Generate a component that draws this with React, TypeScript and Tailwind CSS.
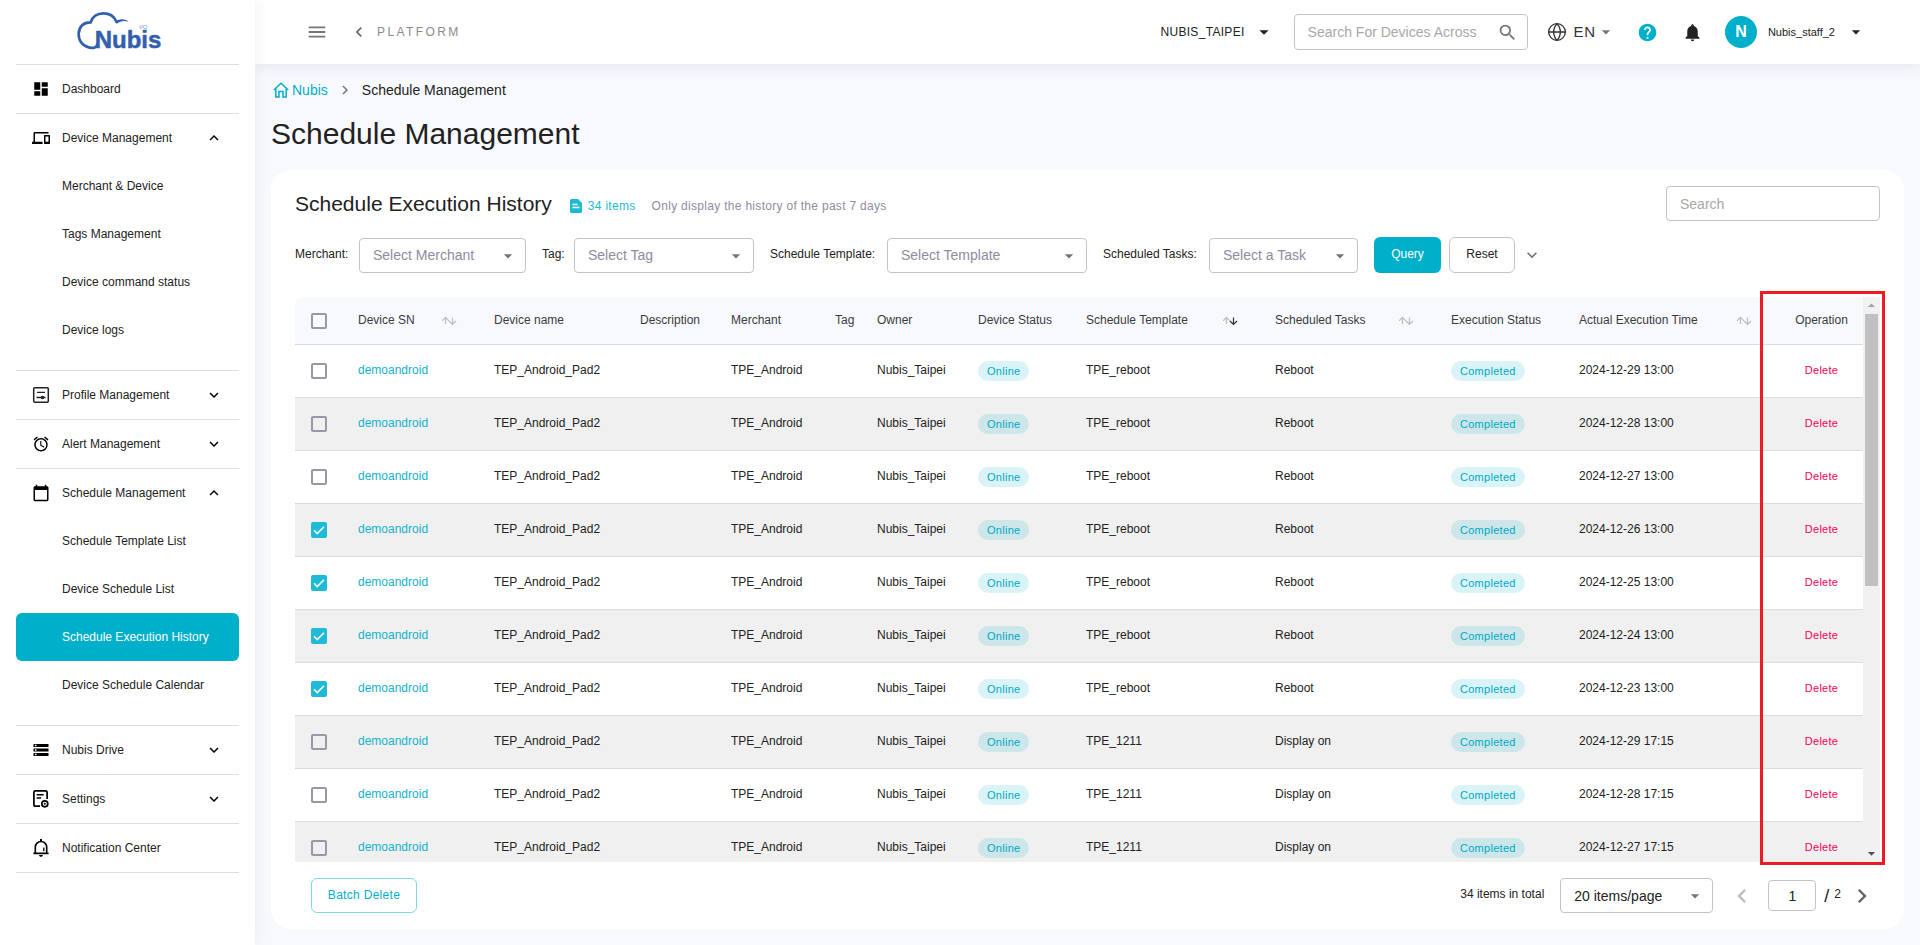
import { useState } from "react";
import type { ReactNode } from "react";
import { Globe } from "lucide-react";
import {
  MdAlarm,
  MdArrowDropDown,
  MdArrowDropUp,
  MdCalendarToday,
  MdChevronLeft,
  MdChevronRight,
  MdDashboard,
  MdDevices,
  MdHelp,
  MdKeyboardArrowDown,
  MdKeyboardArrowUp,
  MdMenu,
  MdNotifications,
  MdSearch,
  MdStorage,
} from "react-icons/md";

type Row = { template: string; task: string; time: string; checked?: boolean };

const ROWS: Row[] = [
  { template: "TPE_reboot", task: "Reboot", time: "2024-12-29 13:00" },
  { template: "TPE_reboot", task: "Reboot", time: "2024-12-28 13:00" },
  { template: "TPE_reboot", task: "Reboot", time: "2024-12-27 13:00" },
  { template: "TPE_reboot", task: "Reboot", time: "2024-12-26 13:00", checked: true },
  { template: "TPE_reboot", task: "Reboot", time: "2024-12-25 13:00", checked: true },
  { template: "TPE_reboot", task: "Reboot", time: "2024-12-24 13:00", checked: true },
  { template: "TPE_reboot", task: "Reboot", time: "2024-12-23 13:00", checked: true },
  { template: "TPE_1211", task: "Display on", time: "2024-12-29 17:15" },
  { template: "TPE_1211", task: "Display on", time: "2024-12-28 17:15" },
  { template: "TPE_1211", task: "Display on", time: "2024-12-27 17:15" },
];

const COLUMNS: { label: string; width: string; sort?: "none" | "desc"; last?: boolean }[] = [
  { label: "Device SN", width: "w-[136px]", sort: "none" },
  { label: "Device name", width: "w-[146px]" },
  { label: "Description", width: "w-[91px]" },
  { label: "Merchant", width: "w-[104px]" },
  { label: "Tag", width: "w-[42px]" },
  { label: "Owner", width: "w-[101px]" },
  { label: "Device Status", width: "w-[108px]" },
  { label: "Schedule Template", width: "w-[189px]", sort: "desc" },
  { label: "Scheduled Tasks", width: "w-[176px]", sort: "none" },
  { label: "Execution Status", width: "w-[128px]" },
  { label: "Actual Execution Time", width: "w-[183px]", sort: "none", last: true },
];

function Logo() {
  return (
    <svg viewBox="0 0 321 150" className="h-[50px] w-[107px]" aria-label="Nubis">
      <path
        d="M94 112C92 124 80 124 68 121C48 116 37 99 38 79C39 59 53 45 74 46C79 29 94 19 112 19C130 19 144 28 150 42"
        fill="none"
        stroke="#335fae"
        strokeWidth="8"
        strokeLinecap="round"
      />
      <path d="M146 45C158 35 175 34 188 44C174 40 163 42 153 50Z" fill="#335fae" />
      <text
        x="86"
        y="124"
        fontSize="72"
        fontWeight="700"
        fill="#335fae"
        stroke="#335fae"
        strokeWidth="1.5"
        strokeLinejoin="round"
        fontFamily="Liberation Sans, Arial, sans-serif"
      >
        Nubis
      </text>
      <text x="220" y="66" fontSize="18" fill="#6f8fc9" fontFamily="Liberation Sans, Arial, sans-serif">
        I/O
      </text>
    </svg>
  );
}

function ProfileIcon() {
  return (
    <svg viewBox="0 0 18 18" className="size-[18px]" fill="none" stroke="#222" strokeWidth="1.5">
      <rect x="1.7" y="1.7" width="14.6" height="14.6" rx="1" />
      <path d="M5 6.300h8M4.500 11.500h9" strokeWidth="1.300" />
      <circle cx="10.500" cy="11.500" r="1.800" fill="#222" stroke="none" />
    </svg>
  );
}

function SettingsIcon() {
  return (
    <svg viewBox="0 0 18 18" className="size-[18px]" fill="none" stroke="#000" strokeWidth="1.7">
      <path d="M8 16.2H3.2a1.3 1.3 0 0 1-1.3-1.3V2.1A1.3 1.3 0 0 1 3.2.9h10.6a1.3 1.3 0 0 1 1.3 1.3V9" />
      <path d="M4.6 4.8h7M4.6 8h4.5" strokeWidth="1.5" />
      <circle cx="12.8" cy="13.8" r="3" />
      <circle cx="12.8" cy="13.8" r="1" fill="#000" stroke="none" />
    </svg>
  );
}

function BellIcon() {
  return (
    <svg viewBox="0 0 18 18" className="size-[18px]" fill="none" stroke="#000" strokeWidth="1.6">
      <path d="M1.4 14.4h15.2M3.3 14.4V8.2a5.7 5.7 0 0 1 11.4 0v6.2" />
      <path d="M11.8 8.4v3.8" strokeWidth="1.3" />
      <path d="M9 0v2.4" strokeWidth="2" />
      <path d="M6.9 16h4.2L10 17.8H8z" fill="#000" stroke="none" />
    </svg>
  );
}

function HomeIcon() {
  return (
    <svg viewBox="0 0 16 16" className="size-4" fill="none" stroke="#00afc9" strokeWidth="1.5">
      <path d="M.8 8 8 1.200 15.200 8" />
      <path d="M2.800 6.500v8.500h3.200V9.500h4V15h3.200V6.500" />
    </svg>
  );
}

function DocIcon() {
  return (
    <svg viewBox="0 0 12 14" className="h-[14px] w-3">
      <path d="M1.5 0H8l4 4v8.5a1.5 1.5 0 0 1-1.5 1.5h-9A1.5 1.5 0 0 1 0 12.5v-11A1.5 1.5 0 0 1 1.5 0Z" fill="#1fbbd3" />
      <path d="M2.5 5.500h5M2.500 8.500h7" stroke="#fff" strokeWidth="1.3" />
    </svg>
  );
}

function SortIcon({ state }: { state: "none" | "desc" }) {
  return (
    <svg viewBox="0 0 16 10" className="h-[10px] w-4" fill="none" strokeWidth="1.2">
      <path d="M4.5 8V1.5M1 4.8l3.5-3.5L8 4.8" stroke="#bdbdbd" />
      <path d="M11.5 1.5V8M8 5l3.5 3.5L15 5" stroke={state === "desc" ? "#333" : "#bdbdbd"} />
    </svg>
  );
}

function Section({
  icon,
  label,
  open,
  children,
}: {
  icon: ReactNode;
  label: string;
  open?: boolean;
  children?: ReactNode;
}) {
  return (
    <li className="border-b border-[#dedede]">
      <button type="button" className="flex h-12 w-full items-center pl-4 pr-4 text-left">
        <span className="flex w-[18px] justify-center">{icon}</span>
        <span className="ml-3 flex-1">{label}</span>
        {open === true && <MdKeyboardArrowUp size={18} color="#000" />}
        {open === false && <MdKeyboardArrowDown size={18} color="#000" />}
      </button>
      {children && <ul className="pb-4">{children}</ul>}
    </li>
  );
}

function SubItem({ label, active }: { label: string; active?: boolean }) {
  return (
    <li>
      <a
        href="#"
        className={`flex h-12 items-center rounded-md pl-[46px] ${active ? "bg-[#00afc9] font-medium text-white" : ""}`}
      >
        {label}
      </a>
    </li>
  );
}

function Sidebar() {
  return (
    <aside className="z-10 w-[255px] shrink-0 bg-white px-4 text-xs text-[#222] shadow-[0_0_14px_rgba(40,50,90,0.08)]">
      <div className="flex h-16 items-center pl-[50px]">
        <Logo />
      </div>
      <ul className="border-t border-[#dedede]">
        <Section icon={<MdDashboard size={18} color="#000" />} label="Dashboard" />
        <Section icon={<MdDevices size={18} color="#000" />} label="Device Management" open>
          <SubItem label="Merchant & Device" />
          <SubItem label="Tags Management" />
          <SubItem label="Device command status" />
          <SubItem label="Device logs" />
        </Section>
        <Section icon={<ProfileIcon />} label="Profile Management" open={false} />
        <Section icon={<MdAlarm size={18} color="#000" />} label="Alert Management" open={false} />
        <Section icon={<MdCalendarToday size={18} color="#000" />} label="Schedule Management" open>
          <SubItem label="Schedule Template List" />
          <SubItem label="Device Schedule List" />
          <SubItem label="Schedule Execution History" active />
          <SubItem label="Device Schedule Calendar" />
        </Section>
        <Section icon={<MdStorage size={18} color="#000" />} label="Nubis Drive" open={false} />
        <Section icon={<SettingsIcon />} label="Settings" open={false} />
        <Section icon={<BellIcon />} label="Notification Center" />
      </ul>
    </aside>
  );
}

function TopBar() {
  return (
    <header className="flex h-16 shrink-0 items-center bg-white pl-[51px] pr-[54px] text-[#222] shadow-[0_2px_14px_rgba(40,50,90,0.1)]">
      <button type="button" aria-label="Menu">
        <MdMenu size={22} color="#757575" />
      </button>
      <button type="button" className="ml-[21px] flex items-center gap-2 text-xs tracking-[0.2em] text-[#8a8a8a]">
        <MdChevronLeft size={20} color="#666" />
        PLATFORM
      </button>
      <div className="flex-1" />
      <button type="button" className="flex items-center gap-2 text-xs tracking-wide">
        NUBIS_TAIPEI
        <MdArrowDropDown size={22} />
      </button>
      <label className="ml-[19px] flex h-9 w-[234px] items-center rounded border border-[#c4c4c4] pl-[13px] pr-[9px]">
        <input
          type="text"
          aria-label="Search devices"
          placeholder="Search For Devices Across All"
          className="w-[170px] text-sm outline-none placeholder:text-[#a8a8a8]"
        />
        <MdSearch size={21} color="#757575" className="ml-auto" />
      </label>
      <button type="button" className="ml-[19px] flex items-center text-[15px] tracking-wider text-[#333]">
        <Globe size={20} strokeWidth={1.6} className="mr-[7px]" />
        EN
        <MdArrowDropDown size={20} color="#757575" />
      </button>
      <button type="button" aria-label="Help" className="ml-[21px]">
        <MdHelp size={21} color="#00afc9" />
      </button>
      <button type="button" aria-label="Notifications" className="ml-6">
        <MdNotifications size={21} />
      </button>
      <button type="button" className="ml-[22px] flex items-center text-[11px]">
        <span className="flex size-8 items-center justify-center rounded-full bg-[#00afc9] text-base font-bold text-white">
          N
        </span>
        <span className="ml-[11px] mr-[11px]">Nubis_staff_2</span>
        <MdArrowDropDown size={20} />
      </button>
    </header>
  );
}

function SelectBox({
  id,
  text,
  width,
  dark,
}: {
  id: string;
  text: string;
  width: string;
  dark?: boolean;
}) {
  return (
    <div className={`relative ${width}`}>
      <select
        id={id}
        className={`h-[35px] w-full appearance-none rounded border border-[#c4c4c4] bg-white pl-[13px] text-sm ${
          dark ? "text-[#222]" : "text-[#8f8ba0]"
        }`}
      >
        <option>{text}</option>
      </select>
      <MdArrowDropDown size={20} color="#757575" className="pointer-events-none absolute right-2 top-2" />
    </div>
  );
}

function CheckBox({ label, checked }: { label: string; checked?: boolean }) {
  const [on, setOn] = useState(!!checked);
  return (
    <label className="relative ml-4 block size-4">
      <input
        type="checkbox"
        aria-label={label}
        checked={on}
        onChange={(e) => setOn(e.target.checked)}
        className="peer block size-4 appearance-none rounded-xs border-2 border-[#9a97a8] checked:border-[#1fbbd6] checked:bg-[#1fbbd6]"
      />
      <svg
        viewBox="0 0 16 16"
        className="pointer-events-none absolute inset-0 hidden size-4 peer-checked:block"
        fill="none"
        stroke="#fff"
        strokeWidth="1.6"
      >
        <path d="m3 8.3 3.3 3.3L13 4.8" />
      </svg>
    </label>
  );
}

function Chip({ children }: { children: ReactNode }) {
  return (
    <span className="flex h-5 w-fit items-center rounded-full bg-[#00afc8]/15 px-[9px] text-[11px] tracking-wide text-[#00a9c4]">
      {children}
    </span>
  );
}

function HistoryTable() {
  return (
    <div className="relative mt-6 flex min-h-0 flex-1">
      <div className="min-w-0 flex-1 overflow-hidden rounded-tl-lg">
        <table className="w-full table-fixed border-separate border-spacing-0 text-left text-xs text-[#222]">
          <thead className="bg-[#f8f9fd] text-[#3a3a44]">
            <tr className="*:h-12 *:border-b *:border-[#dcdcdc] *:p-0 *:font-normal">
              <th className="w-[63px]">
                <CheckBox label="Select all" />
              </th>
              {COLUMNS.map((c) => (
                <th key={c.label} className={c.width}>
                  <div className={`flex items-center justify-between ${c.last ? "pr-[10px]" : c.sort ? "pr-[37px]" : ""}`}>
                    <span className="whitespace-nowrap pb-[2px]">{c.label}</span>
                    {c.sort && <SortIcon state={c.sort} />}
                  </div>
                </th>
              ))}
              <th className="w-[101px] text-center">
                <div className="pb-[2px] pl-[18px]">Operation</div>
              </th>
            </tr>
          </thead>
          <tbody>
            {ROWS.map((r, i) => (
              <tr
                key={r.template + r.time}
                className="*:h-[53px] *:border-b *:border-[#dcdcdc] *:p-0 even:bg-[#f0f0f0]"
              >
                <td>
                  <CheckBox label={`Select row ${i + 1}`} checked={r.checked} />
                </td>
                <td className="pb-[3px]!">
                  <a href="#" className="text-[#14b1ca]">
                    demoandroid
                  </a>
                </td>
                <td className="pb-[3px]!">TEP_Android_Pad2</td>
                <td />
                <td className="pb-[3px]!">TPE_Android</td>
                <td />
                <td className="pb-[3px]!">Nubis_Taipei</td>
                <td>
                  <Chip>Online</Chip>
                </td>
                <td className="pb-[3px]!">{r.template}</td>
                <td className="pb-[3px]!">{r.task}</td>
                <td>
                  <Chip>Completed</Chip>
                </td>
                <td className="pb-[3px]!">{r.time}</td>
                <td className="pb-[3px]! text-center">
                  <button type="button" className="pl-[18px] text-[11px] tracking-wide text-[#f50057]">
                    Delete
                  </button>
                </td>
              </tr>
            ))}
          </tbody>
        </table>
      </div>
      <div className="flex w-[17px] shrink-0 flex-col items-center bg-[#f1f1f1]">
        <MdArrowDropUp size={17} color="#a3a3a3" />
        <div className="h-[272px] w-[13px] bg-[#c1c1c1]" />
        <MdArrowDropDown size={17} color="#505050" className="mt-auto" />
      </div>
      <div className="pointer-events-none absolute -bottom-[3px] -right-[5px] -top-[6px] w-[125px] border-[3px] border-[#ed1c24]" />
    </div>
  );
}

export default function App() {
  return (
    <div className="flex h-screen min-h-[800px] bg-[#f8f9fd] font-['Liberation_Sans',Arial,sans-serif]">
      <Sidebar />
      <div className="flex min-w-0 flex-1 flex-col">
        <TopBar />
        <main className="flex min-h-0 flex-1 flex-col px-4 pb-4 pt-4">
          <nav className="flex h-5 items-center pl-[2px] text-sm text-[#222]">
            <a href="#" className="flex items-center gap-[3px] text-[#00afc9]">
              <HomeIcon />
              Nubis
            </a>
            <MdChevronRight size={18} color="#757575" className="mx-2" />
            <span>Schedule Management</span>
          </nav>
          <h1 className="mb-[18px] mt-4 text-3xl text-[#222]">Schedule Management</h1>
          <section className="flex min-h-0 flex-1 flex-col rounded-[20px] bg-white px-6 py-4">
            <div className="flex h-[35px] items-center">
              <h2 className="text-[21px] text-[#222]">Schedule Execution History</h2>
              <div className="ml-[18px] mt-[5px] flex items-center text-xs tracking-wide">
                <DocIcon />
                <span className="ml-[6px] text-[#1fb9d1]">34 items</span>
                <span className="ml-4 text-[#8f8ba0]">Only display the history of the past 7 days</span>
              </div>
              <input
                type="search"
                aria-label="Search"
                placeholder="Search"
                className="ml-auto h-[35px] w-[214px] rounded border border-[#c4c4c4] px-[13px] text-sm placeholder:text-[#a8a8a8]"
              />
            </div>
            <div className="mt-4 flex h-9 items-center text-xs text-[#222]">
              <label htmlFor="merchant" className="w-16 pb-[2px]">
                Merchant:
              </label>
              <SelectBox id="merchant" text="Select Merchant" width="w-[167px]" />
              <label htmlFor="tag" className="ml-4 w-8 pb-[2px]">
                Tag:
              </label>
              <SelectBox id="tag" text="Select Tag" width="w-[180px]" />
              <label htmlFor="template" className="ml-4 w-[117px] whitespace-nowrap pb-[2px]">
                Schedule Template:
              </label>
              <SelectBox id="template" text="Select Template" width="w-[200px]" />
              <label htmlFor="task" className="ml-4 w-[106px] whitespace-nowrap pb-[2px]">
                Scheduled Tasks:
              </label>
              <SelectBox id="task" text="Select a Task" width="w-[149px]" />
              <button type="button" className="ml-4 h-9 w-[67px] rounded-md bg-[#00afc9] pb-[3px] font-medium text-white">
                Query
              </button>
              <button type="button" className="ml-2 h-9 w-[66px] rounded-md border border-[#c4c4c4] pb-[3px]">
                Reset
              </button>
              <button type="button" aria-label="More filters" className="ml-[7px]">
                <MdKeyboardArrowDown size={20} color="#757575" />
              </button>
            </div>
            <HistoryTable />
            <footer className="mt-4 flex h-[35px] shrink-0 items-center pl-4 text-xs text-[#222]">
              <button
                type="button"
                className="h-[35px] w-[106px] rounded-md border border-[#7fd7e4] pb-[2px] tracking-wide text-[#00afc9]"
              >
                Batch Delete
              </button>
              <label htmlFor="page-size" className="ml-auto mr-4 pb-[3px]">
                34 items in total
              </label>
              <SelectBox id="page-size" text="20 items/page" width="w-[153px]" dark />
              <button type="button" aria-label="Previous page" className="ml-[15px]">
                <MdChevronLeft size={28} color="#bdbdbd" />
              </button>
              <input
                type="text"
                aria-label="Page"
                defaultValue="1"
                className="ml-3 h-[31px] w-12 rounded border border-[#c4c4c4] text-center text-sm"
              />
              <span className="ml-2 text-lg">/</span>
              <span className="ml-[5px] pb-[3px]">2</span>
              <button type="button" aria-label="Next page" className="ml-[7px] mr-1">
                <MdChevronRight size={28} color="#666" />
              </button>
            </footer>
          </section>
        </main>
      </div>
    </div>
  );
}
